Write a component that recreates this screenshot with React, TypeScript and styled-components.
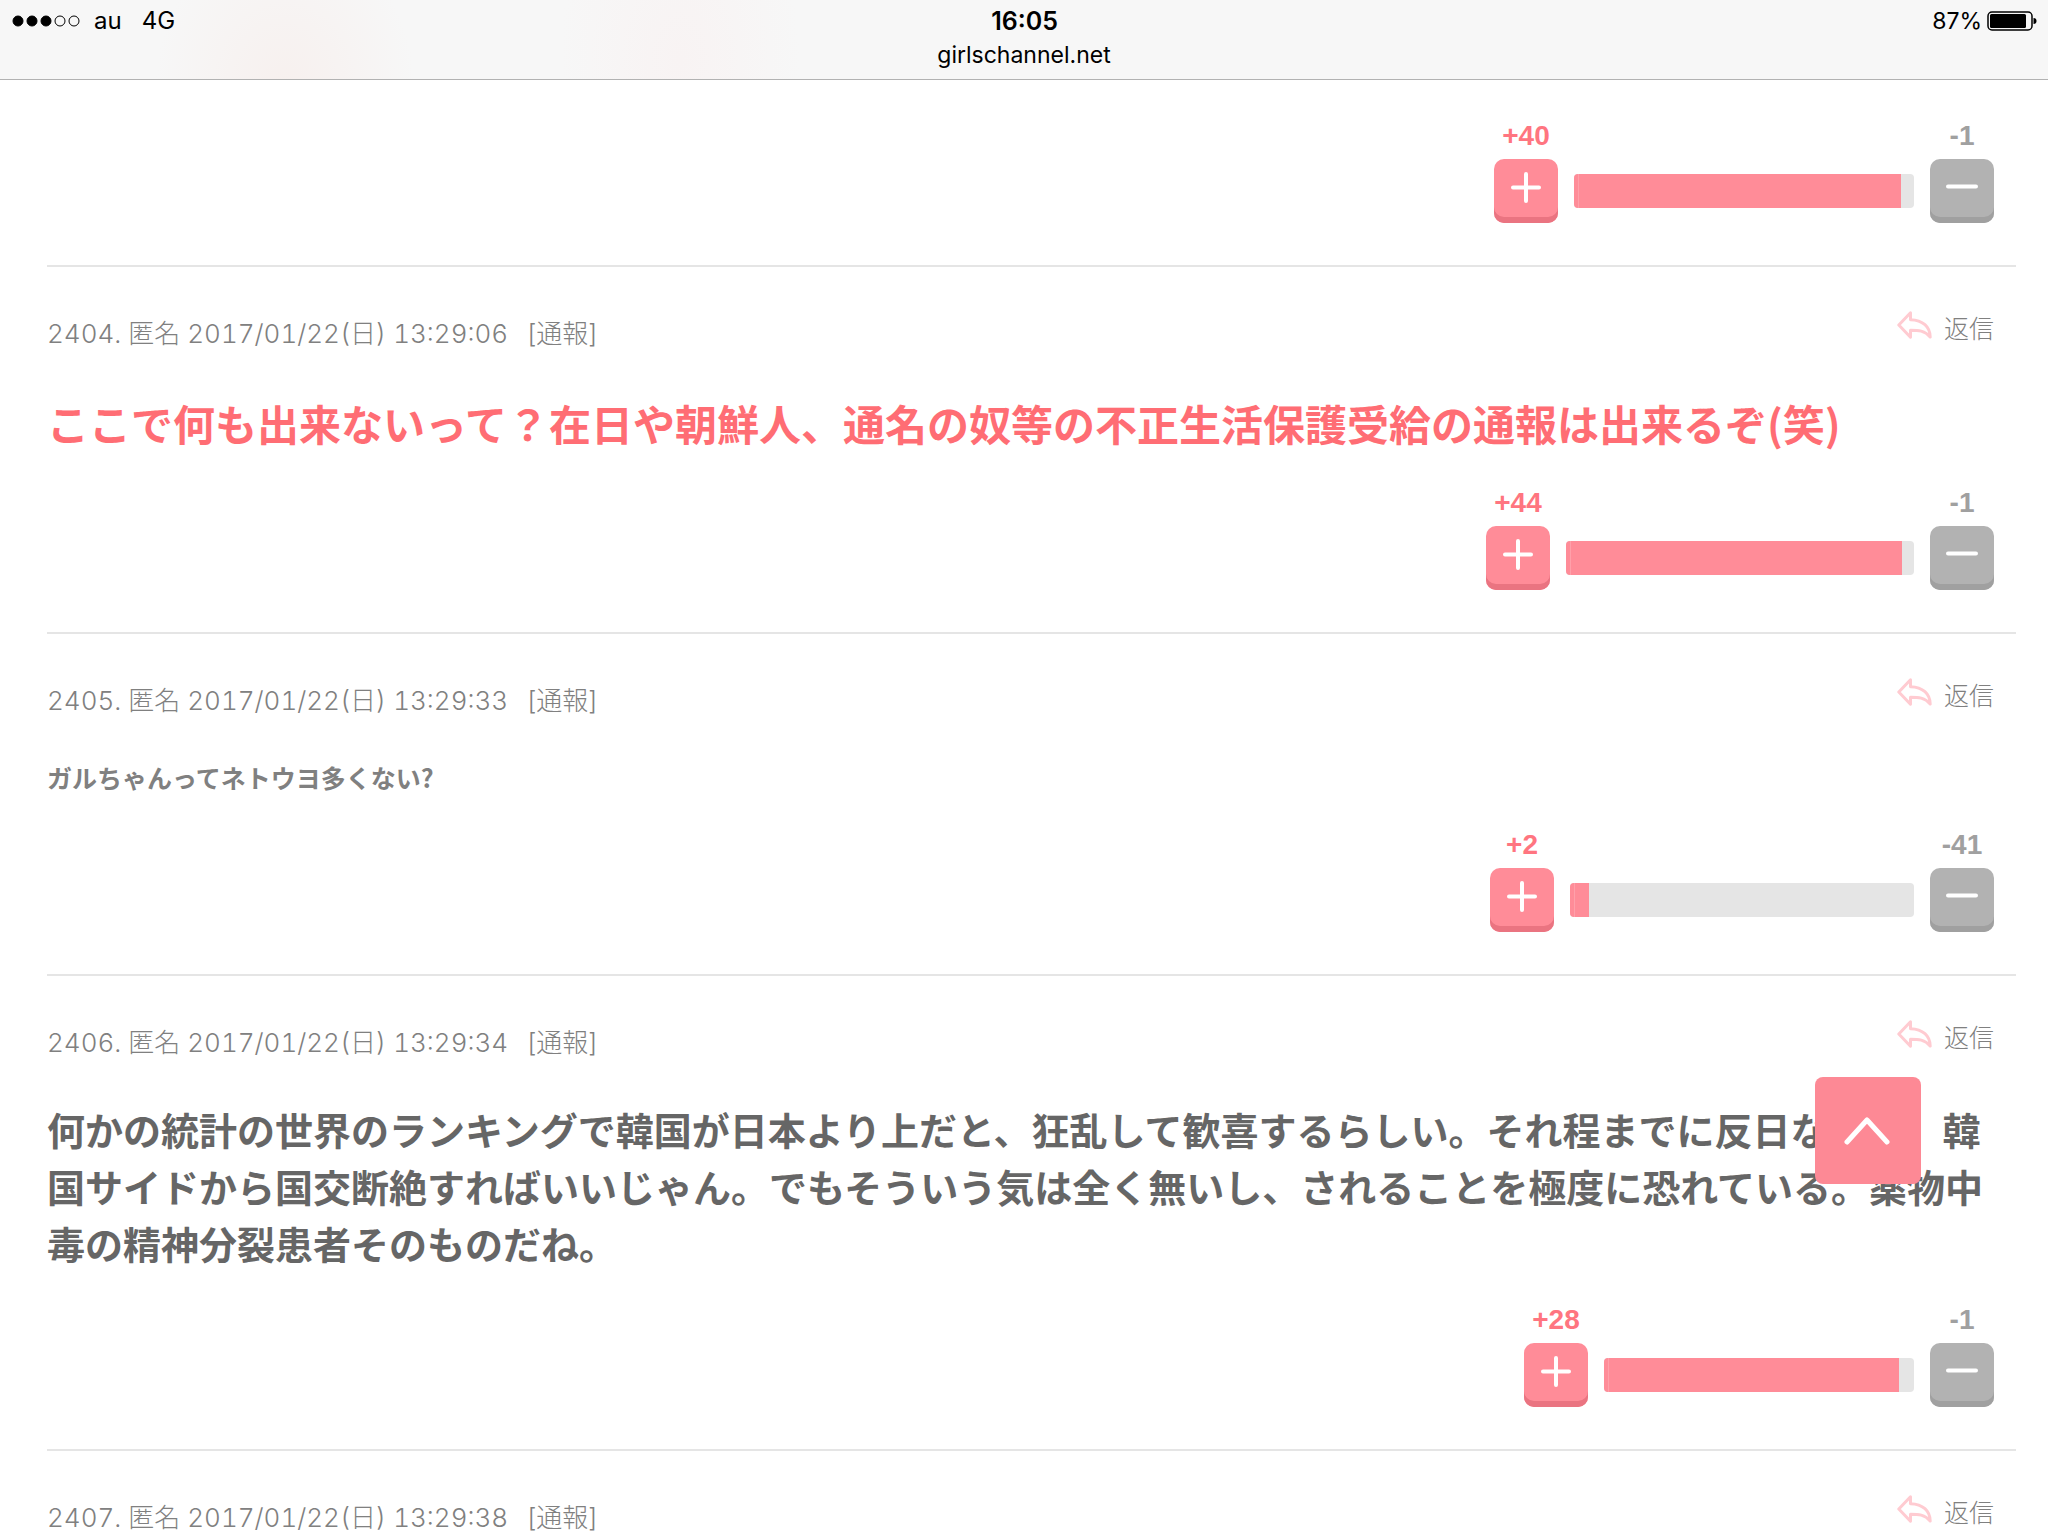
import React from "react";
import styled, { createGlobalStyle } from "styled-components";

const pink = "#ff8c98";
const ui = `Inter, "Liberation Sans", "Noto Sans CJK JP", sans-serif`;
const jp = `"Noto Sans CJK JP", sans-serif`;

const GlobalStyle = createGlobalStyle`
  *, *::before, *::after { box-sizing: border-box; }
  body { margin: 0; background: #fff; font-family: ${jp}; }
  button { border: 0; padding: 0; cursor: pointer; }
  svg { display: block; }
`;

const StatusBar = styled.header`
  position: sticky;
  top: 0;
  z-index: 2;
  height: 80px;
  padding-top: 4px;
  border-bottom: 1px solid #b2b2b2;
  background:
    radial-gradient(ellipse 130px 160px at 285px 90px, #f7f0ee, rgba(247, 240, 238, 0)),
    radial-gradient(ellipse 120px 200px at 680px 60px, #f8f3f3, rgba(248, 243, 243, 0)),
    #f7f7f7;
  color: #000;
  font-family: ${ui};
  font-size: 23px;
  line-height: 34px;
`;

const StatusRow = styled.div`
  display: grid;
  grid-template-columns: 1fr auto 1fr;
  padding: 0 11px 0 12px;
`;

const Carrier = styled.div`
  display: flex;
  align-items: center;
  gap: 20px;
  font-size: 24px;
`;

const Signal = styled.div`
  display: flex;
  align-items: center;
  gap: 14px;
`;

const Clock = styled.time`
  font-size: 25px;
  font-weight: 600;
`;

const Battery = styled.div`
  display: flex;
  align-items: center;
  justify-content: flex-end;
  gap: 5px;
`;

const Address = styled.div`
  text-align: center;
`;

const Thread = styled.main`
  padding: 0 32px 0 47px;
`;

const Comment = styled.article`
  padding-right: 22px;
  border-bottom: 2px solid #e5e5e5;
  &:first-child { padding-top: 7px; }
  &:last-child { border-bottom: 0; }
`;

const CommentHead = styled.header`
  display: flex;
  justify-content: space-between;
  align-items: flex-start;
  padding-top: 44px;
  color: #808080;
`;

const Meta = styled.div`
  display: flex;
  gap: 18px;
  padding-top: 4px;
  font-family: Inter, ${jp};
  font-weight: 300;
  font-size: 26px;
  font-variant-numeric: tabular-nums;
  line-height: 38px;
`;

const PlainLink = styled.a`
  color: inherit;
  text-decoration: none;
`;

const Reply = styled(PlainLink)`
  display: flex;
  align-items: flex-start;
  gap: 12px;
  font-weight: 300;
  font-size: 25px;
  line-height: 32px;
`;

type Size = "small" | "large" | "huge";
const bodyStyles: Record<Size, string> = {
  small: "font-size: 25px; line-height: 38px; color: #808080;",
  large: "font-size: 38px; line-height: 57px; color: #666;",
  huge: "font-size: 42px; line-height: 63px; color: #ff6d74;",
};

const Body = styled.p<{ $size: Size }>`
  margin: 38px 0 0;
  font-weight: 700;
  ${(p) => bodyStyles[p.$size]}
`;

const VoteRow = styled.div`
  display: flex;
  justify-content: flex-end;
  align-items: flex-end;
  gap: 16px;
  padding: 33px 0 42px;
`;

const Vote = styled.div<{ $color: string }>`
  display: flex;
  flex-direction: column;
  align-items: center;
  gap: 7px;
  width: 64px;
  color: ${(p) => p.$color};
  font-family: "Liberation Sans", Arial, sans-serif;
  font-weight: 700;
  font-size: 28px;
  line-height: 32px;
`;

const VoteButton = styled.button<{ $face: string; $edge: string }>`
  display: flex;
  justify-content: center;
  align-items: center;
  width: 64px;
  height: 64px;
  padding-bottom: 8px;
  border-radius: 10px;
  background: ${(p) => p.$face};
  box-shadow: inset 0 -6px 0 ${(p) => p.$edge};
`;

const Track = styled.div`
  height: 34px;
  margin-bottom: 15px;
  border-radius: 4px;
  overflow: hidden;
  background: #e5e5e5;
`;

const Fill = styled.div`
  height: 100%;
  background: linear-gradient(90deg, ${pink} 4px, #ffa0aa 4px, #ffa0aa 5px, ${pink} 5px);
`;

const ToTop = styled.button`
  position: fixed;
  right: 127px;
  bottom: 352px;
  display: flex;
  justify-content: center;
  align-items: center;
  width: 106px;
  height: 107px;
  padding: 0 2px 2px 0;
  border-radius: 8px;
  background: #fd8995;
`;

interface Votes { plus: number; minus: number; width: number }
interface Post { id: number; time: string; size?: Size; text?: string; votes?: Votes }

const posts: Post[] = [
  {
    id: 2404,
    time: "13:29:06",
    size: "huge",
    text: "ここで何も出来ないって？在日や朝鮮人、通名の奴等の不正生活保護受給の通報は出来るぞ(笑)",
    votes: { plus: 44, minus: 1, width: 348 },
  },
  {
    id: 2405,
    time: "13:29:33",
    size: "small",
    text: "ガルちゃんってネトウヨ多くない?",
    votes: { plus: 2, minus: 41, width: 344 },
  },
  {
    id: 2406,
    time: "13:29:34",
    size: "large",
    text: "何かの統計の世界のランキングで韓国が日本より上だと、狂乱して歓喜するらしい。それ程までに反日ならば、韓国サイドから国交断絶すればいいじゃん。でもそういう気は全く無いし、されることを極度に恐れている。薬物中毒の精神分裂患者そのものだね。",
    votes: { plus: 28, minus: 1, width: 310 },
  },
  { id: 2407, time: "13:29:38" },
];

function VoteBar({ plus, minus, width }: Votes) {
  // Both ends keep a 4px cap, so a few votes still show.
  const share = Math.floor((plus / (plus + minus)) * (width - 8)) + 4;
  return (
    <VoteRow>
      <Vote $color="#ff7580">
        <span>+{plus}</span>
        <VoteButton $face={pink} $edge="#ea7481" aria-label="プラス">
          <svg width="32" height="32" viewBox="0 0 32 32" stroke="#fff" strokeWidth="4" strokeLinecap="round">
            <path d="M16 3v27M3 16.500h26" />
          </svg>
        </VoteButton>
      </Vote>
      <Track style={{ width }}>
        <Fill style={{ width: share }} />
      </Track>
      <Vote $color="#a0a0a0">
        <span>-{minus}</span>
        <VoteButton $face="#b2b2b2" $edge="#a0a0a0" aria-label="マイナス">
          <svg width="32" height="32" viewBox="0 0 32 32" stroke="#fff" strokeWidth="4" strokeLinecap="round">
            <path d="M2 15.500h28" />
          </svg>
        </VoteButton>
      </Vote>
    </VoteRow>
  );
}

function ReplyIcon() {
  return (
    <svg width="35" height="28" viewBox="0 0 35 28" fill="none" stroke="#ffcbd1" strokeWidth="3" strokeLinejoin="round">
      <path d="M13.500 1.800 1.800 14l11.700 12.200v-7C21 19.200 28 19.500 33.200 26 33 16 26 9 13.500 8.700z" />
    </svg>
  );
}

function SignalDots() {
  return (
    <svg width="68" height="12" viewBox="0 0 68 12" stroke="#000">
      {[0, 1, 2, 3, 4].map((n) => (
        <circle key={n} cx={6 + n * 14} cy="6" r={5} fill={n < 3 ? "#000" : "none"} />
      ))}
    </svg>
  );
}

function BatteryIcon() {
  return (
    <svg width="50" height="20" viewBox="0 0 50 20">
      <rect x="1" y="1" width="44" height="18" rx="4" fill="none" stroke="#000" strokeWidth="1.500" />
      <rect x="3" y="3" width="36" height="14" rx="1.500" />
      <path d="M46.500 7c2 0 3 1 3 3s-1 3-3 3z" />
    </svg>
  );
}

export default function App() {
  return (
    <>
      <GlobalStyle />
      <StatusBar>
        <StatusRow>
          <Carrier>
            <Signal>
              <SignalDots />
              <span>au</span>
            </Signal>
            <span>4G</span>
          </Carrier>
          <Clock>16:05</Clock>
          <Battery>
            <span>87%</span>
            <BatteryIcon />
          </Battery>
        </StatusRow>
        <Address>girlschannel.net</Address>
      </StatusBar>
      <Thread>
        <Comment>
          <VoteBar plus={40} minus={1} width={340} />
        </Comment>
        {posts.map((post) => (
          <Comment key={post.id}>
            <CommentHead>
              <Meta>
                <span>
                  {post.id}. 匿名 2017/01/22(日) {post.time}
                </span>
                <PlainLink href="#report">[通報]</PlainLink>
              </Meta>
              <Reply href="#reply">
                <ReplyIcon />
                返信
              </Reply>
            </CommentHead>
            {post.text && <Body $size={post.size ?? "small"}>{post.text}</Body>}
            {post.votes && <VoteBar {...post.votes} />}
          </Comment>
        ))}
      </Thread>
      <ToTop aria-label="ページ上部へ" onClick={() => window.scrollTo({ top: 0 })}>
        <svg width="46" height="30" viewBox="0 0 46 30" fill="none" stroke="#fff" strokeWidth="5" strokeLinecap="round" strokeLinejoin="round">
          <path d="M3 27 23 5l20 22" />
        </svg>
      </ToTop>
    </>
  );
}
